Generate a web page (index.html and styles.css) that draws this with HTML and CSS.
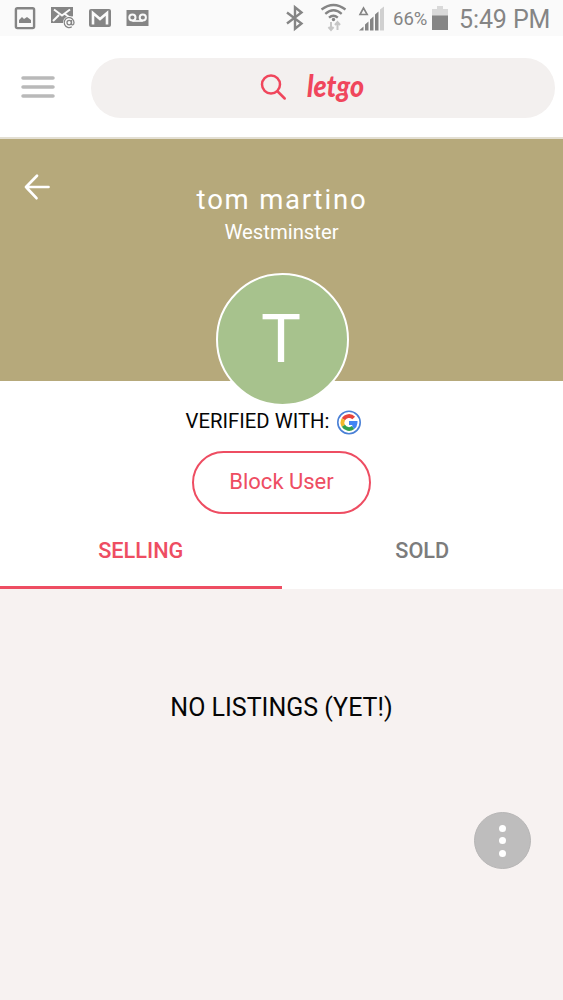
FILE: index.html
```html
<!DOCTYPE html>
<html lang="en">
<head>
<meta charset="utf-8">
<title>letgo</title>
<link rel="stylesheet" href="styles.css">
</head>
<body>
<div class="status">
  <svg class="status-left" width="160" height="36" viewBox="0 0 160 36">
    <rect x="15.9" y="8.3" width="18.2" height="19.8" rx="1.5" fill="none" stroke="#858585" stroke-width="2.4"/>
    <path d="M19 23v-3l3-3 2 2 3-2 4 3v3z" fill="#858585"/>
    <path d="M51 7h22v9l-8 7H51z" fill="#858585"/>
    <path d="M54 9.500l8 6 8-6M53 21l6-6M65 14l4 3" fill="none" stroke="#fafafa" stroke-width="2"/>
    <circle cx="69.500" cy="22.500" r="6.500" fill="#fafafa"/>
    <circle cx="69.200" cy="22.600" r="2.200" fill="none" stroke="#858585" stroke-width="1.300"/>
    <path d="M71.500 20v4c0 1.500 2.500 1.300 2.500-1.500a4.900 5 0 1 0-2.200 4.300" fill="none" stroke="#858585" stroke-width="1.300"/>
    <rect x="89" y="9" width="22" height="18" rx="2" fill="#858585"/>
    <path d="M93 24.500V13l7 6 7-6v11.500" fill="none" stroke="#fafafa" stroke-width="2.600"/>
    <rect x="126.500" y="10" width="22" height="16" fill="#858585"/>
    <circle cx="132.400" cy="17.500" r="3.100" fill="none" stroke="#fafafa" stroke-width="2"/>
    <circle cx="142.800" cy="17.500" r="3.100" fill="none" stroke="#fafafa" stroke-width="2"/>
    <path d="M132.400 21h10.400" stroke="#fafafa" stroke-width="1.700"/>
  </svg>
  <svg class="status-signal" width="104" height="36" viewBox="284 0 104 36">
    <path d="M287 12.500l14.500 11-6.500 5.300V7.200l6.500 5.300-14.500 11" fill="none" stroke="#858585" stroke-width="2.400"/>
    <g fill="none" stroke="#858585" stroke-width="2.300">
      <path d="M321.500 9.500q12-9 24 0M325.300 13.800q8.200-7 16.400 0M329 17.700q4.400-4 8.800 0"/>
    </g>
    <circle cx="333.500" cy="19.500" r="1.700" fill="#858585"/>
    <path d="M331 22v8m-2.500-3l2.500 3 2.500-3M337.500 30v-8m-2.500 3l2.500-3 2.500 3" fill="none" stroke="#c6c6c6" stroke-width="2"/>
    <path d="M360 14.500l3.500-6.500 3.700 6.500z" fill="none" stroke="#858585" stroke-width="1.600"/>
    <path d="M359 30.500l4.500-4v4zM365 24.500l3.500-3v9H365zM370 19.500l3.500-3v14H370zM375 14.500l3.500-3v19H375z" fill="#858585"/>
    <path d="M380 9.500l4-3v24h-4z" fill="#d0d0d0"/>
  </svg>
  <span class="percent">66%</span>
  <svg class="battery" width="16" height="26" viewBox="0 0 16 26">
    <path d="M0 4h5V1h6v3h5v7H0z" fill="#d9d9d9"/><path d="M0 10.500h16V25H0z" fill="#858585"/>
  </svg>
  <span class="clock">5:49 PM</span>
</div>
<header class="topbar">
  <svg class="menu" width="34" height="24" viewBox="0 0 34 24">
    <path d="M2 3h30M2 12h30M2 21h30" stroke="#b9b9b9" stroke-width="3.500" stroke-linecap="round"/>
  </svg>
  <div class="search">
    <svg width="160" height="60" viewBox="0 0 160 60">
      <g fill="none" stroke="#f0465c" stroke-width="2.500" stroke-linecap="round"><circle cx="12" cy="26.500" r="9"/><path d="M18.700 33.500l7 7"/></g>
      <text class="logo" x="48" y="38.500" textLength="57" lengthAdjust="spacingAndGlyphs">letgo</text>
    </svg>
  </div>
</header>
<section class="profile">
  <svg class="back" width="26" height="26" viewBox="0 0 26 26">
    <path d="M13 1.800L2 13l10.500 11.200M2 13h22.500" fill="none" stroke="#fff" stroke-width="2.700" stroke-linecap="round" stroke-linejoin="round"/>
  </svg>
  <div class="identity">
    <h1 class="name">tom martino</h1>
    <p class="city">Westminster</p>
    <div class="avatar">T</div>
  </div>
</section>
<section class="actions">
  <div class="verified"><span>VERIFIED WITH:</span>
    <svg width="26" height="26" viewBox="0 0 26 26">
      <circle cx="13" cy="13.500" r="11.200" fill="#fff" stroke="#4a80d6" stroke-width="1.600"/>
      <g fill="none" stroke-width="3.800" transform="translate(0 .5)">
        <path d="M17.700 8.500A6.500 6.500 0 0 0 7.400 9.700" stroke="#e8453c"/>
        <path d="M7.400 9.700a6.500 6.500 0 0 0 0 6.600" stroke="#f4b92a"/>
        <path d="M7.400 16.300a6.500 6.500 0 0 0 9.700 1.800" stroke="#34a04f"/>
        <path d="M17.100 18.100a6.500 6.500 0 0 0 2.400-4.600H13" stroke="#4285f4"/>
      </g>
    </svg>
  </div>
  <button class="block">Block User</button>
</section>
<nav class="tabs"><a class="tab active">SELLING</a><a class="tab">SOLD</a></nav>
<main class="listings">
  <p class="empty">NO LISTINGS (YET!)</p>
  <button class="more"><i></i><i></i><i></i></button>
</main>
</body>
</html>
```
FILE: styles.css
```css
* { box-sizing: border-box; }
body { margin: 0; width: 563px; height: 1000px; overflow: hidden; background: #fff; color: #050505; font-family: Roboto, sans-serif; display: flex; flex-direction: column; }
svg { display: block; flex: none; overflow: visible; }
h1, p { margin: 0; font-weight: 400; }
button { font-family: inherit; padding: 0; }
.status { height: 36px; flex: none; display: flex; background: #fafafa; color: #858585; white-space: nowrap; }
.status-signal { margin-left: 124px; }
.percent { width: 39px; margin-left: 5px; font-size: 18.5px; line-height: 39px; }
.battery { margin-top: 5px; }
.clock { margin-left: 11px; font-size: 25px; line-height: 39px; letter-spacing: -.1px; }
.topbar { height: 103px; flex: none; display: flex; padding: 22px 8px 0 21px; border-bottom: 2px solid #e3dfd3; }
.menu { margin-top: 17px; }
.search { width: 464px; height: 60px; margin-left: 36px; padding-left: 168px; border-radius: 30px; background: #f3f0ef; }
.logo { font: italic 900 31px Lato, sans-serif; fill: #f0465c; }
.profile { height: 242px; flex: none; background: #b6a97b; display: grid; grid-template-columns: 563px; }
.profile > * { grid-area: 1 / 1; }
.back { margin: 35px 0 0 24px; }
.identity { display: flex; flex-direction: column; align-items: center; color: #fff; }
.name { margin-top: 44px; font-size: 27.5px; line-height: 34px; letter-spacing: 1.8px; padding-left: 1px; }
.city { line-height: 30px; font-size: 20.3px; }
.avatar { flex: none; width: 133px; height: 133px; margin: 26px 0 0 1px; border: 2px solid #fff; border-radius: 50%; background: #a7c28d; font-size: 67px; line-height: 129px; text-align: center; padding-right: 2px; z-index: 1; }
.actions { height: 135px; flex: none; padding-top: 27px; display: flex; flex-direction: column; align-items: center; }
.verified { height: 28px; display: flex; align-items: center; gap: 7px; margin-right: 15px; font-size: 20.3px; line-height: 26px; }
.verified span { padding-bottom: 2px; }
.block { margin-top: 15px; width: 179px; height: 63px; border: 2px solid #ee4d62; border-radius: 32px; background: #fff; color: #ee4d62; font-size: 22px; line-height: 57px; padding-bottom: 2px; }
.tabs { height: 73px; flex: none; display: grid; grid-template-columns: 1fr 1fr; }
.tab { color: #7c7c7c; text-align: center; font-size: 21.7px; font-weight: 500; line-height: 70px; }
.active { color: #ee4d62; border-bottom: 3px solid #ee4d62; }
.listings { flex: 1; background: #f7f2f1; display: flex; flex-direction: column; align-items: center; }
.empty { margin-top: 103px; font-size: 25px; line-height: 32px; }
.more { width: 57px; height: 57px; margin: 88px 32px 0 0; align-self: flex-end; border: 1px solid #b7b6b6; border-radius: 50%; background: #bebdbd; display: flex; flex-direction: column; align-items: center; justify-content: center; gap: 5.5px; }
.more i { width: 7px; height: 7px; border-radius: 50%; background: #fff; }
```
